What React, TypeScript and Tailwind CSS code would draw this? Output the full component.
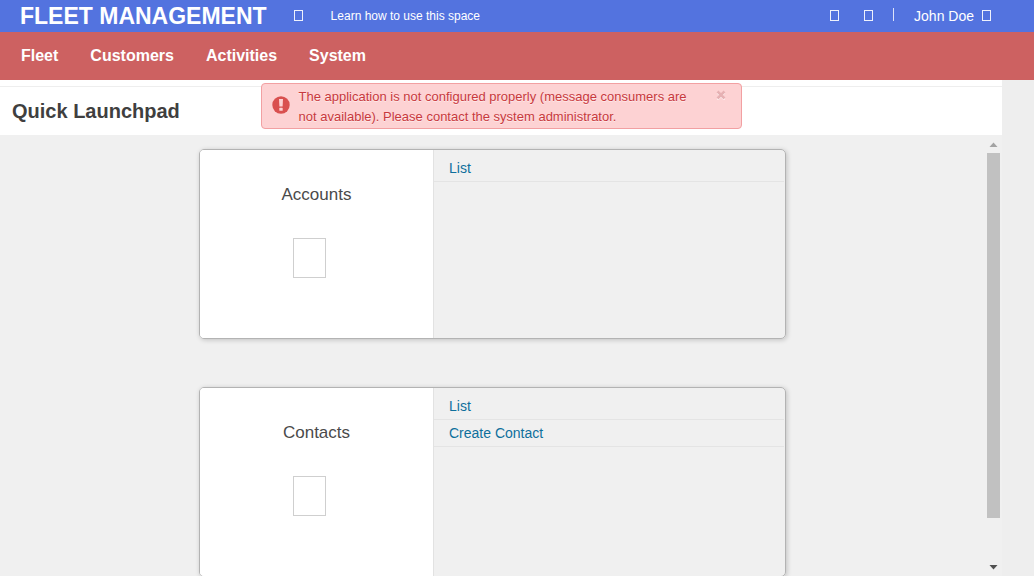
import { useState } from 'react';

type Card = { title: string; links: string[] };

const menu = ['Fleet', 'Customers', 'Activities', 'System'];

const cards: Card[] = [
  { title: 'Accounts', links: ['List'] },
  { title: 'Contacts', links: ['List', 'Create Contact'] },
];

function Glyph() {
  return <span aria-hidden="true" className="mb-[2px] block h-[11px] w-[9px] border border-white/90" />;
}

function TopBar() {
  return (
    <header className="flex h-8 shrink-0 items-center bg-[#5373df] pl-5 pr-[43px] text-white">
      <h1 className="text-[23px] font-bold leading-8">FLEET MANAGEMENT</h1>
      <button type="button" aria-label="Help" className="ml-[27px]">
        <Glyph />
      </button>
      <a href="#learn" className="ml-7 text-xs leading-8">
        Learn how to use this space
      </a>
      <div className="ml-auto flex items-center">
        <button type="button" aria-label="Search" className="mr-[25px]">
          <Glyph />
        </button>
        <button type="button" aria-label="Settings">
          <Glyph />
        </button>
        <span className="mx-5 mb-1 h-[13px] w-px bg-white/80" />
        <button type="button" className="flex items-center gap-2 text-sm leading-8">
          John Doe
          <Glyph />
        </button>
      </div>
    </header>
  );
}

function Alert({ onClose }: { onClose: () => void }) {
  return (
    <div
      role="alert"
      className="absolute inset-x-0 top-[3px] mx-auto flex w-[481px] rounded-[4px] border border-[#f2a0a2] bg-[#fdd2d3] pb-px pl-[10px] pr-[15px] pt-[3px] text-[#c8393d]"
    >
      <svg viewBox="0 0 18 18" className="mt-[9px] h-[18px] w-[18px] shrink-0" aria-hidden="true">
        <circle cx="9" cy="9" r="8.7" fill="#d9504f" />
        <path d="M7 3h4l-.4 7.6H7.4z" fill="#fdd2d3" />
        <rect x="7.3" y="11.8" width="3.4" height="3" rx="0.6" fill="#fdd2d3" />
      </svg>
      <p className="ml-[9px] w-[400px] text-[13px] leading-5 [text-shadow:0_1px_0_rgba(255,255,255,0.5)]">
        The application is not configured properly (message consumers are not available). Please contact the system
        administrator.
      </p>
      <button type="button" aria-label="Dismiss" onClick={onClose} className="ml-auto mt-[3px] h-[10px] w-[10px]">
        <svg viewBox="0 0 10 10" className="h-[10px] w-[10px]" aria-hidden="true">
          <path d="M1.5 2.5l7 7M8.5 2.5l-7 7" stroke="#fff" strokeWidth="2" />
          <path d="M1.5 1.5l7 7M8.5 1.5l-7 7" stroke="#e6b1b3" strokeWidth="2.6" />
        </svg>
      </button>
    </div>
  );
}

function LaunchCard({ card }: { card: Card }) {
  return (
    <section className="flex h-[190px] rounded-[5px] border border-[#b3b3b3] shadow-[1px_1px_5px_rgba(0,0,0,0.2)]">
      <div className="flex w-2/5 flex-col items-center rounded-l-[4px] border-r border-[#e2e2e2] bg-white pt-[35px]">
        <h3 className="text-[17px] leading-5 text-[#4a4a4a]">{card.title}</h3>
        <span aria-hidden="true" className="mr-[14px] mt-[33px] h-10 w-[33px] border border-[#cfcfcf]" />
      </div>
      <ul className="flex-1 pt-[5px]">
        {card.links.map((link) => (
          <li key={link} className="mr-px border-b border-[#e4e4e4] pl-[15px]">
            <a href="#open" className="block text-sm leading-[26px] text-[#0e6f9c]">
              {link}
            </a>
          </li>
        ))}
      </ul>
    </section>
  );
}

function ScrollRail() {
  return (
    <div aria-hidden="true" className="mr-[2px] flex w-[13px] shrink-0 flex-col">
      <svg viewBox="0 0 13 18" className="h-[18px] w-[13px] shrink-0">
        <path d="M2.5 12L6.5 7.5L10.5 12z" fill="#a3a3a3" />
      </svg>
      <div className="min-h-0 flex-1">
        <div className="h-9/10 bg-[#c1c1c1]" />
      </div>
      <svg viewBox="0 0 13 18" className="h-[18px] w-[13px] shrink-0">
        <path d="M2.5 7L6.5 11.5L10.5 7z" fill="#505050" />
      </svg>
    </div>
  );
}

export default function App() {
  const [alertOpen, setAlertOpen] = useState(true);

  return (
    <div className="flex h-screen flex-col overflow-hidden bg-[#eeeeee] font-['Liberation_Sans',Arial,sans-serif]">
      <TopBar />
      <nav className="flex h-12 shrink-0 items-center gap-8 bg-[#cd6161] pl-[21px] text-base font-bold text-white">
        {menu.map((item) => (
          <a key={item} href={'#' + item.toLowerCase()}>
            {item}
          </a>
        ))}
      </nav>
      <main className="relative mr-8 flex min-h-0 flex-1 flex-col bg-[#f0f0f0]">
        <div className="shrink-0 bg-white pt-[6px]">
          <h2 className="border-t border-[#eeeeee] pl-3 text-xl font-bold leading-[48px] text-[#3f3f3f]">
            Quick Launchpad
          </h2>
        </div>
        {alertOpen && <Alert onClose={() => setAlertOpen(false)} />}
        <div className="flex min-h-0 flex-1">
          <div className="min-w-0 flex-1 overflow-y-auto pr-[2px] pt-[14px] [scrollbar-width:none]">
            <div className="mx-auto flex w-[587px] flex-col gap-12">
              {cards.map((card) => (
                <LaunchCard key={card.title} card={card} />
              ))}
            </div>
          </div>
          <ScrollRail />
        </div>
      </main>
    </div>
  );
}
